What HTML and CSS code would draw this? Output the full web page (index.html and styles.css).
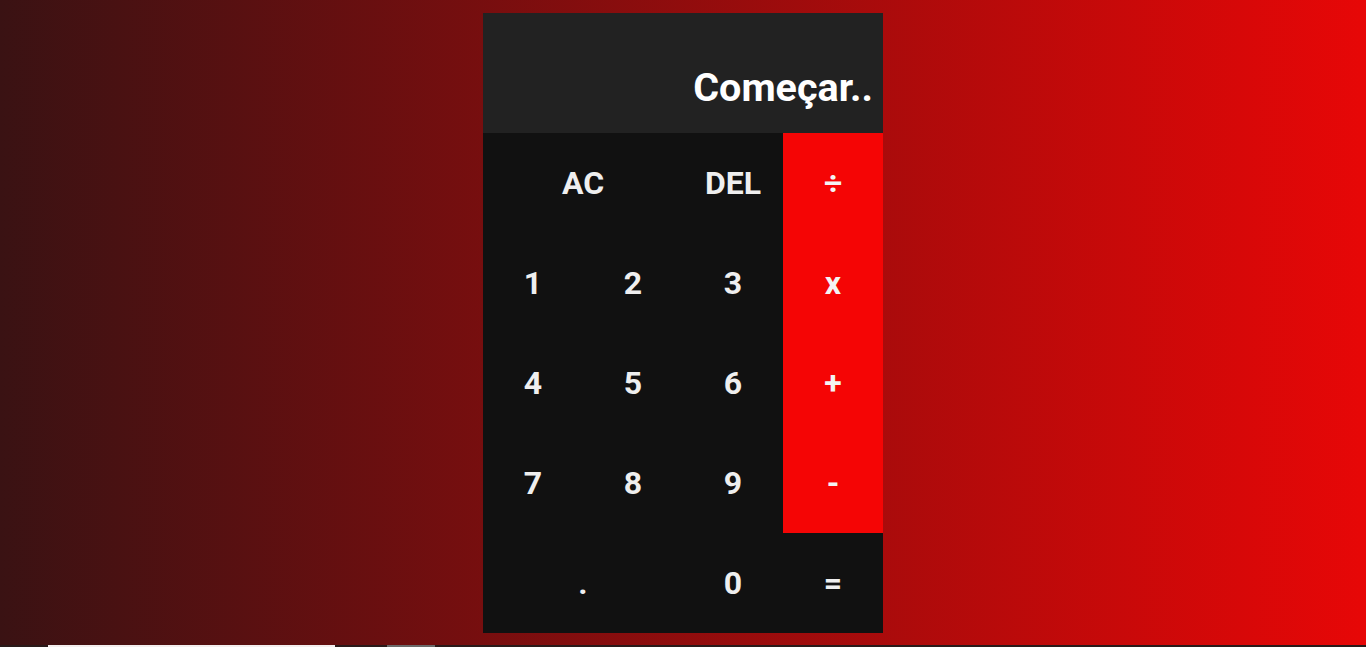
FILE: index.html
```html
<!DOCTYPE html>
<html lang="pt">
<head>
<meta charset="utf-8">
<title>Calculadora</title>
<link rel="stylesheet" href="styles.css">
</head>
<body>
<main class="page">
  <div class="calculator">
    <div class="output">
      <div class="current">Começar..</div>
    </div>
    <button class="span-two">AC</button>
    <button>DEL</button>
    <button class="op">÷</button>
    <button>1</button>
    <button>2</button>
    <button>3</button>
    <button class="op">x</button>
    <button>4</button>
    <button>5</button>
    <button>6</button>
    <button class="op">+</button>
    <button>7</button>
    <button>8</button>
    <button>9</button>
    <button class="op">-</button>
    <button class="span-two">.</button>
    <button>0</button>
    <button>=</button>
  </div>
</main>
<div class="strip">
  <span class="seg-white"></span>
  <span class="seg-grey"></span>
</div>
</body>
</html>
```
FILE: styles.css
```css
* { box-sizing: border-box; }
html, body { margin: 0; padding: 0; }
body {
  width: 1366px;
  height: 647px;
  overflow: hidden;
  background: linear-gradient(to right, #3a1213, #e70707);
  font-family: Roboto, "Liberation Sans", sans-serif;
}
.page {
  height: 645px;
  padding-top: 13px;
  display: flex;
  justify-content: center;
  align-items: flex-start;
}
.calculator {
  display: grid;
  grid-template-columns: repeat(4, 100px);
  grid-template-rows: 120px repeat(5, 100px);
}
.output {
  grid-column: 1 / -1;
  background: #222222;
  display: flex;
  align-items: flex-end;
  justify-content: flex-end;
  padding: 0 10px 26px 0;
}
.current {
  color: #ffffff;
  font-size: 39.5px;
  font-weight: 700;
  line-height: 1;
}
button {
  border: none;
  outline: none;
  background: #111111;
  color: #efefef;
  font-family: Roboto, "Liberation Sans", sans-serif;
  font-size: 32px;
  font-weight: 700;
  padding: 0;
  cursor: pointer;
}
button.op {
  background: #f50505;
  color: #f4f4f4;
}
.span-two { grid-column: span 2; }
.strip {
  height: 2px;
  background: #2a1a1a;
  display: flex;
}
.seg-white {
  display: block;
  margin-left: 48px;
  width: 287px;
  height: 2px;
  background: #f3eeee;
}
.seg-grey {
  display: block;
  margin-left: 52px;
  width: 48px;
  height: 2px;
  background: #6a6a6a;
}
```
